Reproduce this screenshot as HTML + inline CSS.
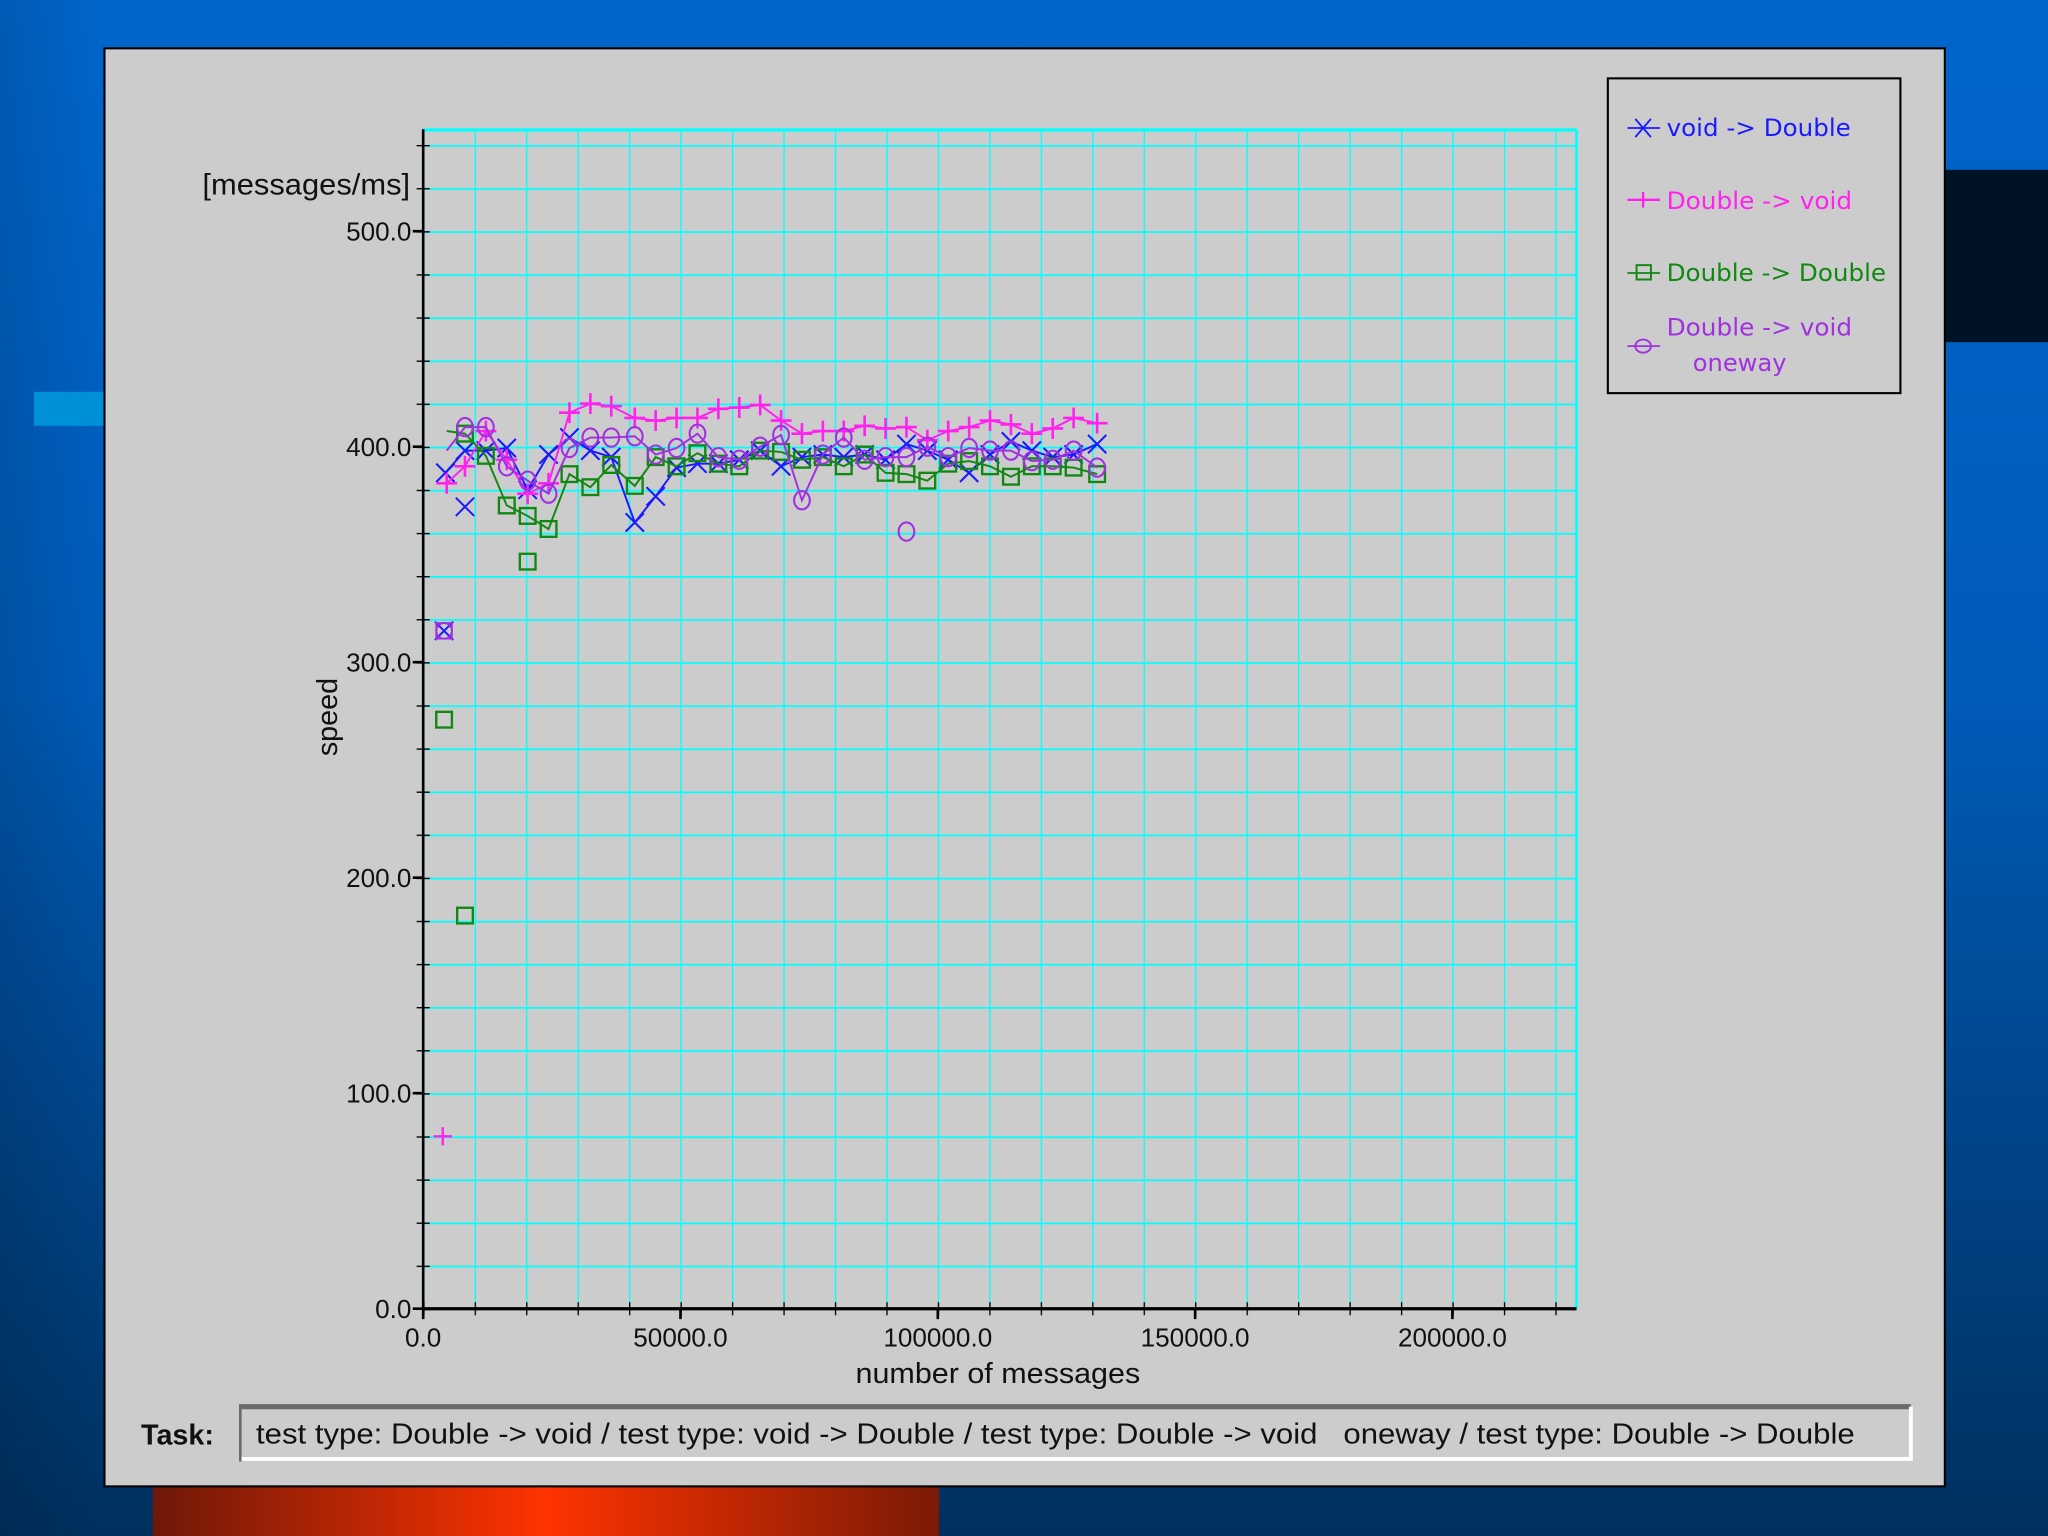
<!DOCTYPE html>
<html><head><style>
html,body{margin:0;padding:0;width:2048px;height:1536px;overflow:hidden;background:#004a99}
svg{display:block}
</style></head><body>
<svg width="2048" height="1536" viewBox="0 0 1568 1176" xmlns="http://www.w3.org/2000/svg">
<defs>
<linearGradient id="bg" x1="0" y1="0" x2="0" y2="1">
<stop offset="0" stop-color="#0066cc"/><stop offset="0.45" stop-color="#005bb8"/><stop offset="1" stop-color="#00305f"/></linearGradient>
<linearGradient id="lft" x1="0" y1="0" x2="1" y2="0">
<stop offset="0" stop-color="#000" stop-opacity="0.12"/><stop offset="1" stop-color="#000" stop-opacity="0"/></linearGradient>
<linearGradient id="red" x1="0" y1="0" x2="1" y2="0">
<stop offset="0" stop-color="#6e1808"/><stop offset="0.5" stop-color="#ff3300"/><stop offset="1" stop-color="#7a1a06"/></linearGradient>
<pattern id="grid" patternUnits="userSpaceOnUse" x="324" y="1002" width="39.4" height="33">
<line x1="0" y1="0" x2="0" y2="33" stroke="#00ffff" stroke-width="2"/>
<line x1="0" y1="0" x2="39.4" y2="0" stroke="#00ffff" stroke-width="2.6"/>
</pattern>
<pattern id="ytk" patternUnits="userSpaceOnUse" x="0" y="1002" width="20" height="33">
<line x1="0" y1="0" x2="20" y2="0" stroke="#000" stroke-width="2"/></pattern>
<pattern id="xtk" patternUnits="userSpaceOnUse" x="324" y="0" width="39.4" height="20">
<line x1="0" y1="0" x2="0" y2="20" stroke="#000" stroke-width="2"/></pattern>
<marker id="mx" markerUnits="userSpaceOnUse" markerWidth="20" markerHeight="20" refX="10" refY="10"><path d="M3,3L17,17M17,3L3,17" stroke="#1a1aff" stroke-width="1.6" fill="none"/></marker>
<marker id="mp" markerUnits="userSpaceOnUse" markerWidth="20" markerHeight="20" refX="10" refY="10"><path d="M10,2V18M2,10H18" stroke="#ff22ee" stroke-width="2" fill="none"/></marker>
<marker id="ms" markerUnits="userSpaceOnUse" markerWidth="20" markerHeight="20" refX="10" refY="10"><rect x="4" y="4" width="12" height="12" stroke="#118811" stroke-width="1.8" fill="none"/></marker>
<marker id="mo" markerUnits="userSpaceOnUse" markerWidth="20" markerHeight="20" refX="10" refY="10"><ellipse cx="10" cy="10" rx="6" ry="7" stroke="#a030e0" stroke-width="1.6" fill="none"/></marker>
</defs>
<rect width="1568" height="1176" fill="url(#bg)"/>
<rect width="80" height="1176" fill="url(#lft)"/>
<rect x="1489" y="130" width="79" height="132" fill="#001226"/>
<rect x="26" y="300" width="54" height="26" fill="#0090d8"/>
<rect x="117" y="1138" width="602" height="38" fill="url(#red)"/>
<rect x="80" y="37" width="1409" height="1101" fill="#cdcccd" stroke="#000" stroke-width="1.6"/>

<rect x="324" y="99" width="883" height="903" fill="url(#grid)"/>
<line x1="324" y1="99.5" x2="1207" y2="99.5" stroke="#00ffff" stroke-width="2.4"/>
<line x1="1207" y1="99" x2="1207" y2="1002" stroke="#00ffff" stroke-width="2"/>
<rect x="319" y="110" width="10" height="893" fill="url(#ytk)"/>
<rect x="324" y="997" width="875" height="10" fill="url(#xtk)"/>
<path d="M316,177H324M316,342H324M316,507H324M316,672H324M316,837H324M316,1002H324" stroke="#000" stroke-width="2"/>
<path d="M324,1002V1010M521,1002V1010M718,1002V1010M915,1002V1010M1112,1002V1010" stroke="#000" stroke-width="2"/>
<line x1="324" y1="99" x2="324" y2="1003" stroke="#000" stroke-width="2"/>
<line x1="323" y1="1002" x2="1207" y2="1002" stroke="#000" stroke-width="2.5"/>

<g font-family="Liberation Sans, DejaVu Sans, sans-serif" font-size="20" fill="#111" text-anchor="end">
<text x="315" y="184">500.0</text><text x="315" y="349">400.0</text><text x="315" y="514">300.0</text>
<text x="315" y="679">200.0</text><text x="315" y="844">100.0</text><text x="315" y="1009">0.0</text>
</g>
<g font-family="Liberation Sans, DejaVu Sans, sans-serif" font-size="20" fill="#111" text-anchor="middle">
<text x="324" y="1031">0.0</text><text x="521" y="1031">50000.0</text><text x="718" y="1031">100000.0</text>
<text x="915" y="1031">150000.0</text><text x="1112" y="1031">200000.0</text>
<text x="764" y="1059" font-size="22" textLength="218" lengthAdjust="spacingAndGlyphs">number of messages</text>
</g>
<text x="314" y="149" text-anchor="end" font-family="Liberation Sans, sans-serif" font-size="23" fill="#111" textLength="159" lengthAdjust="spacingAndGlyphs">[messages/ms]</text>
<text transform="translate(258,549) rotate(-90)" text-anchor="middle" font-family="Liberation Sans, sans-serif" font-size="22" fill="#111">speed</text>

<!-- data -->
<polyline fill="none" stroke="#1a1aff" stroke-width="1.5" marker-mid="url(#mx)" marker-start="url(#mx)" marker-end="url(#mx)" points="341,362 356,345 372,345 388,343 404,375 420,348 436,335 452,345 468,350 486,400 502,380 518,358 534,355 550,355 566,352 582,345 598,357 614,350 630,348 646,350 662,348 678,352 694,340 710,345 726,352 742,362 758,348 774,338 790,345 806,350 822,348 840,340"/>
<polyline fill="none" stroke="#ff22ee" stroke-width="1.5" marker-mid="url(#mp)" marker-start="url(#mp)" marker-end="url(#mp)" points="342,370 356,357 372,330 388,352 404,378 420,370 436,316 452,309 468,311 486,320 502,322 518,320 534,320 550,313 566,312 582,310 598,322 614,332 630,330 646,330 662,326 678,328 694,327 710,337 726,330 742,327 758,322 774,325 790,332 806,328 822,320 840,324"/>
<polyline fill="none" stroke="#118811" stroke-width="1.5" marker-mid="url(#ms)" marker-end="url(#ms)" points="342,330 356,332 372,349 388,387 404,395 420,405 436,363 452,373 468,356 486,372 502,350 518,357 534,347 550,355 566,357 582,345 598,346 614,352 630,350 646,357 662,348 678,362 694,363 710,368 726,355 742,353 758,357 774,365 790,357 806,357 822,358 840,363"/>
<polyline fill="none" stroke="#a030e0" stroke-width="1.5" marker-mid="url(#mo)" marker-end="url(#mo)" points="342,345 356,327 372,327 388,357 404,368 420,378 436,343 452,335 468,335 486,334 502,348 518,343 534,332 550,350 566,352 582,342 598,333 614,383 630,348 646,335 662,352 678,350 694,350 710,342 726,350 742,343 758,345 774,345 790,353 806,352 822,345 840,358"/>
<g>
<path d="M333,476L347,490M347,476L333,490" stroke="#1a1aff" stroke-width="1.5"/>
<path d="M349,381L363,395M363,381L349,395" stroke="#1a1aff" stroke-width="1.5"/>
<ellipse cx="340" cy="483" rx="6" ry="6" stroke="#a030e0" stroke-width="1.5" fill="none"/>
<rect x="334" y="477" width="12" height="12" stroke="#a030e0" stroke-width="1.3" fill="none"/>
<ellipse cx="694" cy="407" rx="6" ry="7" stroke="#a030e0" stroke-width="1.6" fill="none"/>
<rect x="334" y="545" width="12" height="12" stroke="#118811" stroke-width="1.8" fill="none"/>
<rect x="350" y="695" width="12" height="12" stroke="#118811" stroke-width="1.8" fill="none"/>
<rect x="398" y="424" width="12" height="12" stroke="#118811" stroke-width="1.8" fill="none"/>
<path d="M339,863V877M332,870H346" stroke="#ff22ee" stroke-width="1.8"/>
</g>

<!-- legend -->
<rect x="1231" y="60" width="224" height="241" fill="none" stroke="#000" stroke-width="1.6"/>
<g font-family="DejaVu Sans, Liberation Sans, sans-serif" font-size="18.5">
<path d="M1246,98H1271M1252,91L1264,105M1264,91L1252,105" stroke="#1a1aff" stroke-width="1.4"/>
<text x="1276" y="104" fill="#1a1aff" textLength="141" lengthAdjust="spacingAndGlyphs">void -&gt; Double</text>
<path d="M1246,153H1271M1258,147V159" stroke="#ff22ee" stroke-width="1.8"/>
<text x="1276" y="160" fill="#ff22ee" textLength="142" lengthAdjust="spacingAndGlyphs">Double -&gt; void</text>
<path d="M1246,209H1271" stroke="#118811" stroke-width="1.4"/><rect x="1253" y="203" width="11" height="11" fill="none" stroke="#118811" stroke-width="1.5"/>
<text x="1276" y="215" fill="#118811" textLength="168" lengthAdjust="spacingAndGlyphs">Double -&gt; Double</text>
<path d="M1246,265H1271" stroke="#a030e0" stroke-width="1.4"/><ellipse cx="1258" cy="265" rx="6" ry="5" fill="none" stroke="#a030e0" stroke-width="1.4"/>
<text x="1276" y="257" fill="#a030e0" textLength="142" lengthAdjust="spacingAndGlyphs">Double -&gt; void</text>
<text x="1296" y="284" fill="#a030e0">oneway</text>
</g>

<!-- task -->
<text x="108" y="1106" font-family="Liberation Sans, sans-serif" font-size="22" font-weight="bold" fill="#111">Task:</text>
<rect x="184" y="1075" width="1279" height="44" fill="#cdcccd"/>
<path d="M184,1077H1463" stroke="#6a6a6a" stroke-width="4"/>
<path d="M184,1075V1119" stroke="#6a6a6a" stroke-width="2"/>
<path d="M185,1117H1463V1077" stroke="#fff" stroke-width="3" fill="none"/>
<text x="196" y="1105" font-family="Liberation Sans, sans-serif" font-size="22" fill="#111" textLength="1224" lengthAdjust="spacingAndGlyphs">test type: Double -&gt; void / test type: void -&gt; Double / test type: Double -&gt; void&#160;&#160;&#160;oneway / test type: Double -&gt; Double</text>
</svg>
</body></html>
